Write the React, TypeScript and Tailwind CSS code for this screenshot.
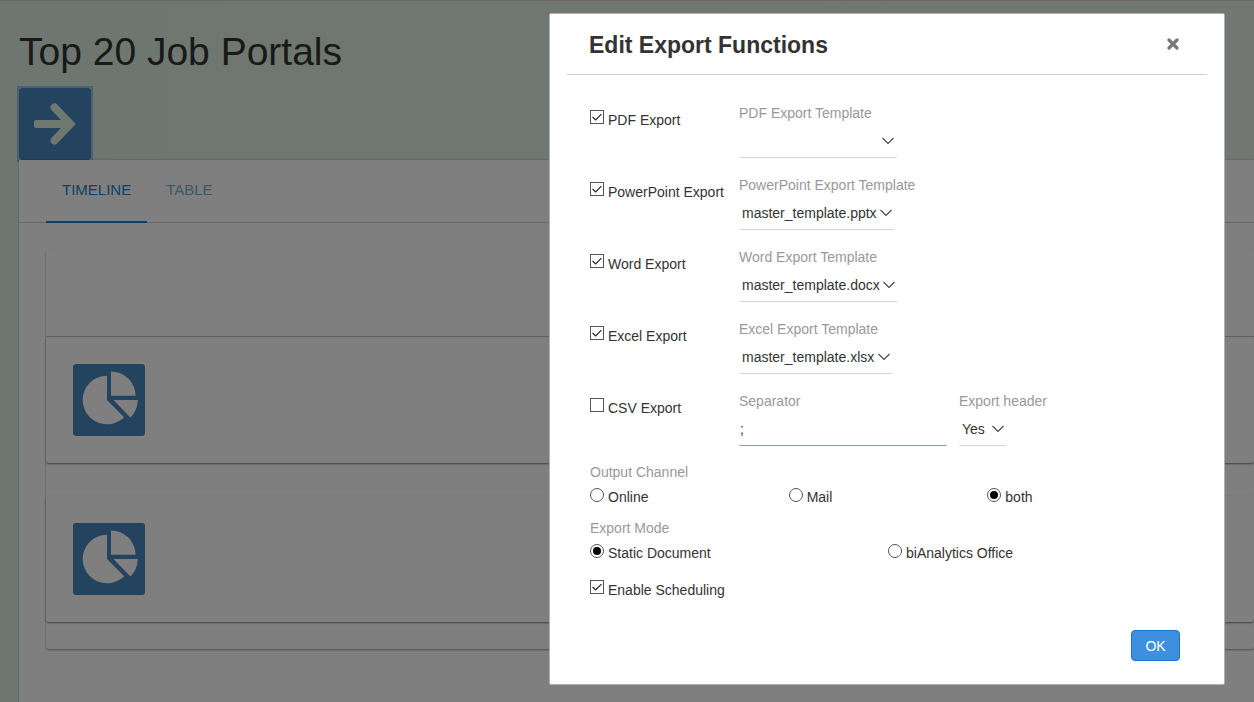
// src/App.tsx
import { useState, type ReactNode } from "react";

type SelectFieldProps = {
  id: string;
  label: string;
  options: string[];
  className?: string;
};

function ArrowIcon() {
  return (
    <svg viewBox="0 0 72 72" className="size-[72px]" aria-hidden="true">
      <rect x="15" y="32" width="36" height="8" rx="2" fill="currentColor" />
      <path
        d="M35.5 19.5 L51.3 36 L35.5 52.5"
        fill="none"
        stroke="currentColor"
        strokeWidth="8"
        strokeLinecap="round"
      />
    </svg>
  );
}

function PieIcon() {
  return (
    <svg viewBox="0 0 72 72" className="size-[72px]" fill="currentColor" aria-hidden="true">
      <path d="M34 36 V11.7 A24.3 24.3 0 1 0 51.2 53.2 Z" />
      <path d="M38 31.7 V7.6 A24.4 24.4 0 0 1 62.6 31.7 Z" />
      <path d="M40.5 36 H64.7 A24.2 24.2 0 0 1 57.4 53.4 Z" />
    </svg>
  );
}

function Check({ label, defaultChecked }: { label: string; defaultChecked?: boolean }) {
  return (
    <label className="flex items-start gap-1 leading-5 whitespace-nowrap">
      <span className="grid size-[14px] shrink-0">
        <input
          type="checkbox"
          defaultChecked={defaultChecked}
          className="peer col-start-1 row-start-1 size-[14px] appearance-none border border-[#555] bg-white"
        />
        <svg
          viewBox="0 0 14 14"
          className="pointer-events-none invisible col-start-1 row-start-1 size-[14px] peer-checked:visible"
          aria-hidden="true"
        >
          <path d="M2.6 7 L5.6 10 L11.4 4.2" fill="none" stroke="#222" strokeWidth="1.2" />
        </svg>
      </span>
      {label}
    </label>
  );
}

function Radio({ name, label, defaultChecked }: { name: string; label: string; defaultChecked?: boolean }) {
  return (
    <label className="flex items-start gap-1 leading-5 whitespace-nowrap">
      <span className="mt-px grid size-[14px] shrink-0 place-items-center">
        <input
          type="radio"
          name={name}
          defaultChecked={defaultChecked}
          className="peer col-start-1 row-start-1 size-[14px] appearance-none rounded-full border border-[#555] bg-white"
        />
        <span className="pointer-events-none invisible col-start-1 row-start-1 size-2 rounded-full bg-black peer-checked:visible" />
      </span>
      {label}
    </label>
  );
}

function SelectField({ id, label, options, className }: SelectFieldProps) {
  return (
    <div className="flex flex-col items-start">
      <label htmlFor={id} className="leading-[21px] whitespace-nowrap text-[#999]">
        {label}
      </label>
      <div className="relative">
        <select
          id={id}
          className={`h-[34px] appearance-none rounded-[2px] border-b border-[#d5d5d5] bg-white pr-[18px] pl-[3px] ${className ?? ""}`}
        >
          {options.map((option) => (
            <option key={option}>{option}</option>
          ))}
        </select>
        <svg
          viewBox="0 0 12 8"
          className="pointer-events-none absolute top-[13px] right-[3px] h-2 w-3"
          aria-hidden="true"
        >
          <path d="M0.5 1 L6 6.5 L11.5 1" fill="none" stroke="#444" strokeWidth="1.1" />
        </svg>
      </div>
    </div>
  );
}

function ExportRow({ label, checked, children }: { label: string; checked?: boolean; children: ReactNode }) {
  return (
    <div className="grid grid-cols-[149px_1fr] items-start">
      <div className="pt-[7px]">
        <Check label={label} defaultChecked={checked} />
      </div>
      <div className="flex gap-3">{children}</div>
    </div>
  );
}

function TimelineCard() {
  return (
    <div className="rounded-[3px] bg-white p-[27px] shadow-[0_1px_2px_rgba(0,0,0,0.5)]">
      <button type="button" aria-label="Show chart" className="block rounded-[3px] bg-[#4686be] text-white">
        <PieIcon />
      </button>
    </div>
  );
}

function Dashboard() {
  return (
    <div className="flex min-h-screen flex-col overflow-hidden border-t border-[#d8d0d4] bg-linear-to-r from-[#dceede] to-[#e4eee8] pl-[19px]">
      <h1 className="pt-7 text-[39px] leading-[46px] text-[#333]">Top 20 Job Portals</h1>
      <button
        type="button"
        aria-label="Next"
        className="mt-[13px] block size-[72px] text-[#dfeee2] outline-2 outline-[#9cbfe6]"
      >
        <span className="block rounded-[3px] bg-[#4686be]">
          <ArrowIcon />
        </span>
      </button>
      <main className="relative flex-1 bg-white pb-6 shadow-[0_0_2px_rgba(0,0,0,0.3)]">
        <nav className="flex h-[63px] gap-[3px] border-b border-[#d0d0d0] pl-[27px] text-[15px]">
          <a href="#timeline" className="-mb-px border-b-2 border-[#1a7fd0] px-4 pt-5 leading-5 text-[#1a7fd0]">
            TIMELINE
          </a>
          <a href="#table" className="px-4 pt-5 leading-5 text-[#78b0d0]">
            TABLE
          </a>
        </nav>
        <div className="pt-[27px] pl-[27px]">
          <section className="rounded-[3px] pb-[27px] shadow-[0_1px_2px_rgba(0,0,0,0.4)]">
            <div className="h-[87px] border-b border-[#c4c4c4]" />
            <div className="flex flex-col gap-[33px]">
              <TimelineCard />
              <TimelineCard />
            </div>
          </section>
        </div>
      </main>
    </div>
  );
}

export default function App() {
  const [open, setOpen] = useState(true);

  return (
    <div className="font-['Liberation_Sans',Arial,sans-serif] text-sm text-[#333]">
      <Dashboard />

      {open && (
        <div className="fixed inset-0 flex items-start justify-end overflow-auto bg-black/50 pt-[13px] pr-[29px]">
          <div
            role="dialog"
            aria-modal="true"
            aria-labelledby="export-title"
            className="w-[676px] max-w-full rounded-[2px] border border-[#b0b0b0] bg-white"
          >
            <header className="mx-[17px] flex h-[61px] items-center justify-between border-b border-[#d0d0d0] pr-7 pl-[22px]">
              <h2 id="export-title" className="pt-[2px] text-[23px] leading-8 font-bold">
                Edit Export Functions
              </h2>
              <button type="button" aria-label="Close" onClick={() => setOpen(false)}>
                <svg viewBox="0 0 12 12" className="size-3" aria-hidden="true">
                  <path
                    d="M2 2 L10 10 M10 2 L2 10"
                    stroke="#777"
                    strokeWidth="3.2"
                    strokeLinecap="round"
                  />
                </svg>
              </button>
            </header>

            <form className="pt-7 pr-[38px] pl-10" onSubmit={(e) => e.preventDefault()}>
              <div className="flex flex-col gap-[17px]">
                <ExportRow label="PDF Export" checked>
                  <SelectField id="pdf-template" label="PDF Export Template" options={[""]} className="w-[158px]" />
                </ExportRow>
                <ExportRow label="PowerPoint Export" checked>
                  <SelectField
                    id="pptx-template"
                    label="PowerPoint Export Template"
                    options={["master_template.pptx"]}
                  />
                </ExportRow>
                <ExportRow label="Word Export" checked>
                  <SelectField id="docx-template" label="Word Export Template" options={["master_template.docx"]} />
                </ExportRow>
                <ExportRow label="Excel Export" checked>
                  <SelectField id="xlsx-template" label="Excel Export Template" options={["master_template.xlsx"]} />
                </ExportRow>
                <ExportRow label="CSV Export">
                  <div className="flex flex-col">
                    <label htmlFor="separator" className="leading-[21px] text-[#999]">
                      Separator
                    </label>
                    <input
                      id="separator"
                      type="text"
                      defaultValue=";"
                      className="h-[34px] w-[208px] rounded-[2px] border-b border-b-[#4fa8f0] bg-white px-px outline-none"
                    />
                  </div>
                  <SelectField id="export-header" label="Export header" options={["Yes", "No"]} className="w-12" />
                </ExportRow>
              </div>

              <fieldset className="mt-4">
                <legend className="leading-5 text-[#999]">Output Channel</legend>
                <div className="mt-[5px] grid grid-cols-3">
                  <Radio name="channel" label="Online" />
                  <Radio name="channel" label="Mail" />
                  <Radio name="channel" label="both" defaultChecked />
                </div>
              </fieldset>

              <fieldset className="mt-[11px]">
                <legend className="leading-5 text-[#999]">Export Mode</legend>
                <div className="mt-[5px] grid grid-cols-2">
                  <Radio name="mode" label="Static Document" defaultChecked />
                  <Radio name="mode" label="biAnalytics Office" />
                </div>
              </fieldset>

              <div className="mt-[17px]">
                <Check label="Enable Scheduling" defaultChecked />
              </div>

              <div className="flex justify-end pt-[30px] pr-[6px] pb-[23px]">
                <button
                  type="submit"
                  className="h-[31px] w-[49px] rounded-[4px] border border-[#1f70c8] bg-[#3f8fe0] text-white"
                >
                  OK
                </button>
              </div>
            </form>
          </div>
        </div>
      )}
    </div>
  );
}
